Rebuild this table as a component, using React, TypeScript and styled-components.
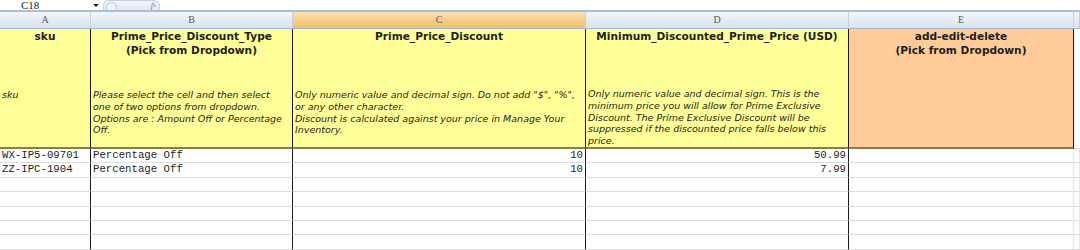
import React from "react";
import styled, { createGlobalStyle, css } from "styled-components";

const GlobalStyle = createGlobalStyle`
  html, body {
    margin: 0;
    padding: 0;
    background: #ffffff;
    overflow: hidden;
  }
`;

const COLS = "91px 202px 293px 263px 225px 6px";

const Page = styled.div`
  width: 1080px;
  height: 250px;
  overflow: hidden;
  display: flex;
  flex-direction: column;
`;

const FormulaBar = styled.div`
  height: 10px;
  display: flex;
  align-items: flex-end;
  border-bottom: 2px solid #a9bfd6;
  background: #ffffff;
  overflow: hidden;
`;

const NameBox = styled.div`
  width: 72px;
  padding-left: 21px;
  font-family: "Liberation Serif", serif;
  font-size: 11px;
  line-height: 10px;
  color: #222;
`;

const DropArrow = styled.div`
  width: 0;
  height: 0;
  margin: 0 0 3px 0;
  border-left: 3px solid transparent;
  border-right: 3px solid transparent;
  border-top: 3px solid #222;
`;

const FxButton = styled.div`
  margin-left: 4px;
  width: 57px;
  height: 12px;
  margin-bottom: -2px;
  border-radius: 6px 6px 0 0;
  background: linear-gradient(#f4f7fb, #dbe4ee);
  border: 1px solid #c2cfdd;
  border-bottom: none;
  position: relative;
  font-family: "Liberation Serif", serif;
  font-style: italic;
  font-size: 9px;
  color: #7d7d7d;
  display: flex;
  align-items: flex-start;
  justify-content: flex-end;
  padding-right: 3px;
  box-sizing: border-box;
  line-height: 9px;
`;

const FxKnob = styled.span`
  position: absolute;
  left: 2px;
  top: 1px;
  width: 9px;
  height: 9px;
  border-radius: 50%;
  border: 1px solid #b8c6d6;
  background: #edf2f8;
`;

const Row = styled.div<{ $height: number }>`
  display: grid;
  grid-template-columns: ${COLS};
  height: ${(p) => p.$height}px;
`;

const ColHead = styled.div<{ $active?: boolean }>`
  box-sizing: border-box;
  border-right: 1px solid #c3cfdc;
  border-bottom: 1px solid #9eb6ce;
  background: ${(p) =>
    p.$active
      ? "linear-gradient(#fbe2b4, #f6cd86 55%, #f2c06c)"
      : "linear-gradient(#f3f6fb, #e4ebf4 55%, #d9e2ee)"};
  font-family: "Liberation Serif", serif;
  font-size: 10px;
  line-height: 16px;
  color: #5a5a5a;
  text-align: center;
`;

const HeadCell = styled.div<{ $tone: "yellow" | "peach" | "blank" }>`
  box-sizing: border-box;
  border-right: 1px solid #1a1a1a;
  border-bottom: 2px solid #8a7a4c;
  background: ${(p) =>
    p.$tone === "yellow" ? "#ffff99" : p.$tone === "peach" ? "#ffcc99" : "#ffffff"};
  ${(p) =>
    p.$tone === "blank" &&
    css`
      border-right: none;
      border-bottom: 1px solid #dadcdd;
    `}
  display: flex;
  flex-direction: column;
  overflow: hidden;
  padding: 0 2px;
`;

const Title = styled.div`
  height: 60px;
  font-family: "DejaVu Sans", Verdana, sans-serif;
  font-weight: bold;
  font-size: 10.6px;
  line-height: 14px;
  color: #1e1e1e;
  text-align: center;
  white-space: nowrap;
`;

const Note = styled.div`
  font-family: "DejaVu Sans", Verdana, sans-serif;
  font-style: italic;
  font-size: 9.5px;
  line-height: 11.8px;
  color: #262612;
  white-space: nowrap;
`;

const Cell = styled.div<{ $num?: boolean; $edge?: boolean }>`
  box-sizing: border-box;
  border-right: 1px solid ${(p) => (p.$edge ? "#e2e4e6" : "#1a1a1a")};
  border-bottom: 1px solid #dadcdd;
  font-family: "Liberation Mono", monospace;
  font-size: 10.7px;
  line-height: 13px;
  color: #1e1e1e;
  padding: 0 2px;
  white-space: nowrap;
  overflow: hidden;
  text-align: ${(p) => (p.$num ? "right" : "left")};
`;

const headers: { letter: string; title: string; note: string; tone: "yellow" | "peach" }[] = [
  { letter: "A", title: "sku", note: "sku", tone: "yellow" },
  {
    letter: "B",
    title: "Prime_Price_Discount_Type\n(Pick from Dropdown)",
    note: "Please select the cell and then select\none of two options from dropdown.\nOptions are : Amount Off or Percentage\nOff.",
    tone: "yellow",
  },
  {
    letter: "C",
    title: "Prime_Price_Discount",
    note: 'Only numeric value and decimal sign. Do not add "$", "%",\nor any other character.\nDiscount is calculated against your price in Manage Your\nInventory.',
    tone: "yellow",
  },
  {
    letter: "D",
    title: "Minimum_Discounted_Prime_Price (USD)",
    note: "Only numeric value and decimal sign. This is the\nminimum price you will allow for Prime Exclusive\nDiscount. The Prime Exclusive Discount will be\nsuppressed if the discounted price falls below this\nprice.",
    tone: "yellow",
  },
  { letter: "E", title: "add-edit-delete\n(Pick from Dropdown)", note: "", tone: "peach" },
];

const rows = [
  ["WX-IP5-09701", "Percentage Off", "10", "50.99", ""],
  ["ZZ-IPC-1904", "Percentage Off", "10", "7.99", ""],
  ["", "", "", "", ""],
  ["", "", "", "", ""],
  ["", "", "", "", ""],
  ["", "", "", "", ""],
  ["", "", "", "", ""],
];

const Lines: React.FC<{ text: string }> = ({ text }) => (
  <>
    {text.split("\n").map((line, i) => (
      <div key={i}>{line}</div>
    ))}
  </>
);

export default function App() {
  return (
    <Page>
      <GlobalStyle />
      <FormulaBar>
        <NameBox>C18</NameBox>
        <DropArrow />
        <FxButton>
          <FxKnob />
          f<sub style={{ fontSize: 6 }}>x</sub>
        </FxButton>
      </FormulaBar>

      <Row $height={17}>
        {headers.map((h) => (
          <ColHead key={h.letter} $active={h.letter === "C"}>
            {h.letter}
          </ColHead>
        ))}
        <ColHead />
      </Row>

      <Row $height={120}>
        {headers.map((h) => (
          <HeadCell key={h.letter} $tone={h.tone}>
            <Title>
              <Lines text={h.title} />
            </Title>
            <Note>
              <Lines text={h.note} />
            </Note>
          </HeadCell>
        ))}
        <HeadCell $tone="blank" />
      </Row>

      {rows.map((r, i) => (
        <Row key={i} $height={14.4}>
          <Cell>{r[0]}</Cell>
          <Cell>{r[1]}</Cell>
          <Cell $num>{r[2]}</Cell>
          <Cell $num>{r[3]}</Cell>
          <Cell $edge>{r[4]}</Cell>
          <Cell $edge />
        </Row>
      ))}
    </Page>
  );
}
